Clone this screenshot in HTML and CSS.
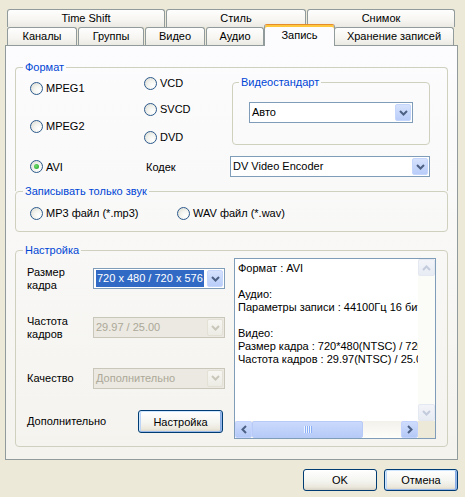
FILE: index.html
```html
<!DOCTYPE html>
<html lang="ru">
<head>
  <meta charset="UTF-8">
  <meta name="viewport" content="width=device-width, initial-scale=1.0">
  <title>Запись</title>
  <link rel="stylesheet" href="styles.css">
</head>
<body>

<div class="dialog">
  <div class="tabbar">
    <div class="tab-row tab-row-top">
      <div class="tab">Time Shift</div>
      <div class="tab">Стиль</div>
      <div class="tab">Снимок</div>
    </div>
    <div class="tab-row tab-row-bottom">
      <div class="tab">Каналы</div>
      <div class="tab">Группы</div>
      <div class="tab">Видео</div>
      <div class="tab">Аудио</div>
      <div class="tab tab-active">Запись</div>
      <div class="tab">Хранение записей</div>
    </div>
  </div>

  <div class="panel">
    <!-- Формат -->
    <fieldset class="group group-format">
      <legend>Формат</legend>
      <div class="format-grid">
        <div class="col-mpeg">
          <label class="radio-item"><span class="radio"></span>MPEG1</label>
          <label class="radio-item"><span class="radio"></span>MPEG2</label>
        </div>
        <div class="col-disc">
          <label class="radio-item"><span class="radio"></span>VCD</label>
          <label class="radio-item"><span class="radio"></span>SVCD</label>
          <label class="radio-item"><span class="radio"></span>DVD</label>
        </div>
        <fieldset class="group group-std">
          <legend>Видеостандарт</legend>
          <div class="combo combo-std">
            <span class="combo-text">Авто</span>
            <span class="combo-btn"><svg width="9" height="6" viewBox="0 0 9 6"><path d="M1 1 L4.5 4.5 L8 1" /></svg></span>
          </div>
        </fieldset>
        <label class="radio-item"><span class="radio radio-on"></span>AVI</label>
        <span class="codec-label">Кодек</span>
        <div class="combo">
          <span class="combo-text">DV Video Encoder</span>
          <span class="combo-btn"><svg width="9" height="6" viewBox="0 0 9 6"><path d="M1 1 L4.5 4.5 L8 1" /></svg></span>
        </div>
      </div>
    </fieldset>

    <!-- Только звук -->
    <fieldset class="group group-audio">
      <legend>Записывать только звук</legend>
      <div class="audio-row">
        <label class="radio-item radio-mp3"><span class="radio"></span>MP3 файл (*.mp3)</label>
        <label class="radio-item"><span class="radio"></span>WAV файл (*.wav)</label>
      </div>
    </fieldset>

    <!-- Настройка -->
    <fieldset class="group group-settings">
      <legend>Настройка</legend>
      <div class="settings-grid">
        <span class="field-label">Размер<br>кадра</span>
        <div class="combo combo-focus">
          <span class="combo-text"><span class="sel">720 x 480 / 720 x 576</span></span>
          <span class="combo-btn"><svg width="9" height="6" viewBox="0 0 9 6"><path d="M1 1 L4.5 4.5 L8 1" /></svg></span>
        </div>

        <div class="info">
          <div class="info-text">
            <div>Формат : AVI</div>
            <div>&nbsp;</div>
            <div>Аудио:</div>
            <div>Параметры записи : 44100Гц 16 бит Стерео</div>
            <div>&nbsp;</div>
            <div>Видео:</div>
            <div>Размер кадра : 720*480(NTSC) / 720*576(PAL)</div>
            <div>Частота кадров : 29.97(NTSC) / 25.00(PAL)</div>
          </div>
          <div class="vscroll">
            <span class="sb-btn sb-off"><svg width="9" height="6" viewBox="0 0 9 6"><path d="M1 5 L4.5 1.5 L8 5" /></svg></span>
            <span class="sb-track"></span>
            <span class="sb-btn sb-off"><svg width="9" height="6" viewBox="0 0 9 6"><path d="M1 1 L4.5 4.5 L8 1" /></svg></span>
          </div>
          <div class="hscroll">
            <span class="sb-btn"><svg width="6" height="9" viewBox="0 0 6 9"><path d="M5 1 L1.5 4.5 L5 8" /></svg></span>
            <span class="sb-track">
              <span class="sb-thumb"><span class="grip"></span></span>
            </span>
            <span class="sb-btn"><svg width="6" height="9" viewBox="0 0 6 9"><path d="M1 1 L4.5 4.5 L1 8" /></svg></span>
          </div>
          <div class="sb-corner"></div>
        </div>

        <span class="field-label">Частота<br>кадров</span>
        <div class="combo combo-off">
          <span class="combo-text">29.97 / 25.00</span>
          <span class="combo-btn"><svg width="9" height="6" viewBox="0 0 9 6"><path d="M1 1 L4.5 4.5 L8 1" /></svg></span>
        </div>

        <span class="field-label">Качество</span>
        <div class="combo combo-off">
          <span class="combo-text">Дополнительно</span>
          <span class="combo-btn"><svg width="9" height="6" viewBox="0 0 9 6"><path d="M1 1 L4.5 4.5 L8 1" /></svg></span>
        </div>

        <span class="field-label nowrap">Дополнительно</span>
        <button class="btn btn-focus btn-setup">Настройка</button>
      </div>
    </fieldset>
  </div>

  <div class="actions">
    <button class="btn">OK</button>
    <button class="btn btn-focus">Отмена</button>
  </div>
</div>

</body>
</html>
```

FILE: styles.css
```css
* {
  box-sizing: border-box;
}
body {
  margin: 0;
  background-color: #ece9d8;
  font-family: "Liberation Sans", Arial, sans-serif;
  font-size: 11px;
  color: #000;
}
.dialog {
  width: 465px;
  height: 497px;
  padding-top: 9px;
}

/* tabs */
.tabbar {
  padding-left: 7px;
}
.tab-row {
  display: flex;
  gap: 1px;
  height: 18px;
}
.tab {
  height: 18px;
  border: 1px solid #919b9c;
  border-bottom: none;
  border-radius: 3px 3px 0 0;
  background: linear-gradient(#fefefe, #f6f5f1 60%, #eae9e2);
  text-align: center;
  line-height: 17px;
  white-space: nowrap;
}
.tab-row-top .tab:nth-child(1) { width: 158px; }
.tab-row-top .tab:nth-child(2) { width: 140px; }
.tab-row-top .tab:nth-child(3) { width: 148px; }
.tab-row-bottom .tab:nth-child(1) { width: 70px; }
.tab-row-bottom .tab:nth-child(2) { width: 66px; }
.tab-row-bottom .tab:nth-child(3) { width: 60px; }
.tab-row-bottom .tab:nth-child(4) { width: 58px; }
.tab-row-bottom .tab:nth-child(6) { width: 120px; margin-left: -2px; }
.tab-active {
  position: relative;
  z-index: 2;
  width: 71px;
  height: 22px;
  margin-top: -3px;
  margin-left: -1px;
  border-top: 1px solid #e68b2c;
  box-shadow: inset 0 2px #ffc73c;
  background: #fcfcfe;
  line-height: 21px;
}

/* panel */
.panel {
  margin-left: 5px;
  width: 453px;
  height: 415px;
  border: 1px solid #919b9c;
  background: linear-gradient(#fcfcfe, #f4f3ee);
  padding: 14px 9px 0;
}
.group {
  margin: 0;
  padding: 0;
  min-width: 0;
  border: 1px solid #d0d0bf;
  border-radius: 4px;
}
.group legend {
  margin-left: 7px;
  padding: 0 2px;
  line-height: 14px;
  color: #0046d5;
}

.group-format {
  border-bottom: none;
  border-radius: 4px 4px 0 0;
  padding-bottom: 14px;
}
.format-grid {
  display: grid;
  grid-template-columns: 114px 86px 200px;
  grid-template-rows: 82px 21px;
  align-items: center;
  padding-left: 14px;
}
.col-mpeg,
.col-disc {
  align-self: start;
  display: flex;
  flex-direction: column;
}
.col-mpeg {
  padding-top: 7px;
  gap: 24px;
}
.col-disc {
  padding-top: 2px;
  gap: 12px;
}
.col-disc .radio-item:last-child {
  margin-top: 2px;
}
.codec-label {
  padding-left: 2px;
}
.group-std {
  align-self: start;
  margin: 1px 0 0 2px;
  width: 198px;
  height: 70px;
}
.group-std legend {
  margin-left: 6px;
}
.combo-std {
  width: 164px;
  margin: 13px 0 0 16px;
}

.group-audio {
  margin-top: -7px;
}
.audio-row {
  display: flex;
  padding: 8px 0 11px 14px;
}
.radio-mp3 {
  width: 147px;
}

.group-settings {
  margin-top: 11px;
}
.settings-grid {
  display: grid;
  grid-template-columns: 66px 132px 1fr;
  grid-template-rows: 41px 57px 44px 43px;
  align-items: center;
  padding: 1px 0 3px 11px;
}
.field-label {
  line-height: 13px;
}
.nowrap {
  white-space: nowrap;
}
.btn-setup {
  justify-self: start;
  width: 85px;
  margin-left: 45px;
}

/* radio buttons */
.radio-item {
  display: flex;
  align-items: center;
  height: 14px;
  line-height: 14px;
  white-space: nowrap;
}
.radio {
  flex: none;
  display: flex;
  align-items: center;
  justify-content: center;
  width: 13px;
  height: 13px;
  margin-right: 3px;
  border: 1px solid #2c5a8c;
  border-radius: 50%;
  background: radial-gradient(circle at 70% 70%, #ffffff 0%, #f3f3ef 45%, #d8d8cf 100%);
}
.radio-on::after {
  content: "";
  width: 5px;
  height: 5px;
  border-radius: 50%;
  background: radial-gradient(circle at 40% 40%, #6fdc6f, #21a121);
}

/* combo boxes */
.combo {
  display: flex;
  height: 21px;
  border: 1px solid #7f9db9;
  background: #fff;
}
.combo-text {
  flex: 1;
  padding-left: 2px;
  line-height: 19px;
  white-space: nowrap;
  overflow: hidden;
}
.combo-btn {
  flex: none;
  display: flex;
  align-items: center;
  justify-content: center;
  width: 16px;
  margin: 1px;
  border: 1px solid #c5d6fc;
  border-radius: 2px;
  background: linear-gradient(#d6e2fd, #b9cdf9);
}
.combo-btn svg path,
.sb-btn svg path {
  fill: none;
  stroke: #4d6185;
  stroke-width: 2;
}
.combo-focus .sel {
  display: inline-block;
  padding: 0 1px;
  line-height: 17px;
  margin-top: 1px;
  background: #316ac5;
  color: #fff;
}
.combo-off {
  border-color: #c9c7ba;
  background: #ebe9e1;
  color: #aca899;
}
.combo-off .combo-btn {
  border-color: #e3e1d6;
  background: linear-gradient(#f7f6f2, #ecebe4);
}
.combo-off .combo-btn svg path {
  stroke: #c9c7ba;
}

/* info box */
.info {
  grid-column: 3;
  grid-row: 1 / span 4;
  align-self: start;
  display: grid;
  grid-template-columns: 1fr 17px;
  grid-template-rows: 1fr 17px;
  width: 202px;
  height: 181px;
  margin-left: 9px;
  border: 1px solid #7f9db9;
  background: #fff;
}
.info-text {
  padding: 3px 0 0 3px;
  line-height: 13px;
  white-space: nowrap;
  overflow: hidden;
}
.vscroll {
  display: flex;
  flex-direction: column;
  background: #fbfbf8;
}
.hscroll {
  display: flex;
  background: linear-gradient(#f3f1ea, #fdfdfa);
}
.sb-btn {
  flex: none;
  display: flex;
  align-items: center;
  justify-content: center;
  width: 17px;
  height: 17px;
  border: 1px solid #c3d3fd;
  border-radius: 2px;
  background: linear-gradient(#cfddfc, #b4c9f7);
}
.sb-off {
  border-color: #e4e8f1;
  background: linear-gradient(#f2f4f9, #e7ebf3);
}
.sb-off svg path {
  stroke: #c3cbdc;
}
.sb-track {
  flex: 1;
  display: flex;
}
.sb-thumb {
  display: flex;
  align-items: center;
  justify-content: center;
  width: 111px;
  border: 1px solid #b7cbf6;
  border-radius: 2px;
  background: linear-gradient(#cad9fc, #b7cbf8);
}
.grip {
  width: 8px;
  height: 7px;
  background: repeating-linear-gradient(90deg, #eef4fe 0 1px, #8cb0f8 1px 2px);
}
.sb-corner {
  background: #ece9d8;
}

/* buttons */
.btn {
  height: 22px;
  width: 74px;
  padding: 0;
  border: 1px solid #003c74;
  border-radius: 3px;
  background: linear-gradient(#ffffff, #f4f4f0 55%, #ebe8dc 85%, #d8d2c6);
  font-family: inherit;
  font-size: 11px;
  color: #000;
}
.btn-focus {
  box-shadow: inset 1px 1px #cee7ff, inset -1px -1px #98b8ea, inset 2px 0 #bcd4f6, inset -2px 0 #89ade4;
}
.btn-setup {
  height: 23px;
  width: 85px;
}
.actions {
  display: flex;
  justify-content: flex-end;
  gap: 7px;
  margin-top: 9px;
  padding-right: 7px;
}
```
